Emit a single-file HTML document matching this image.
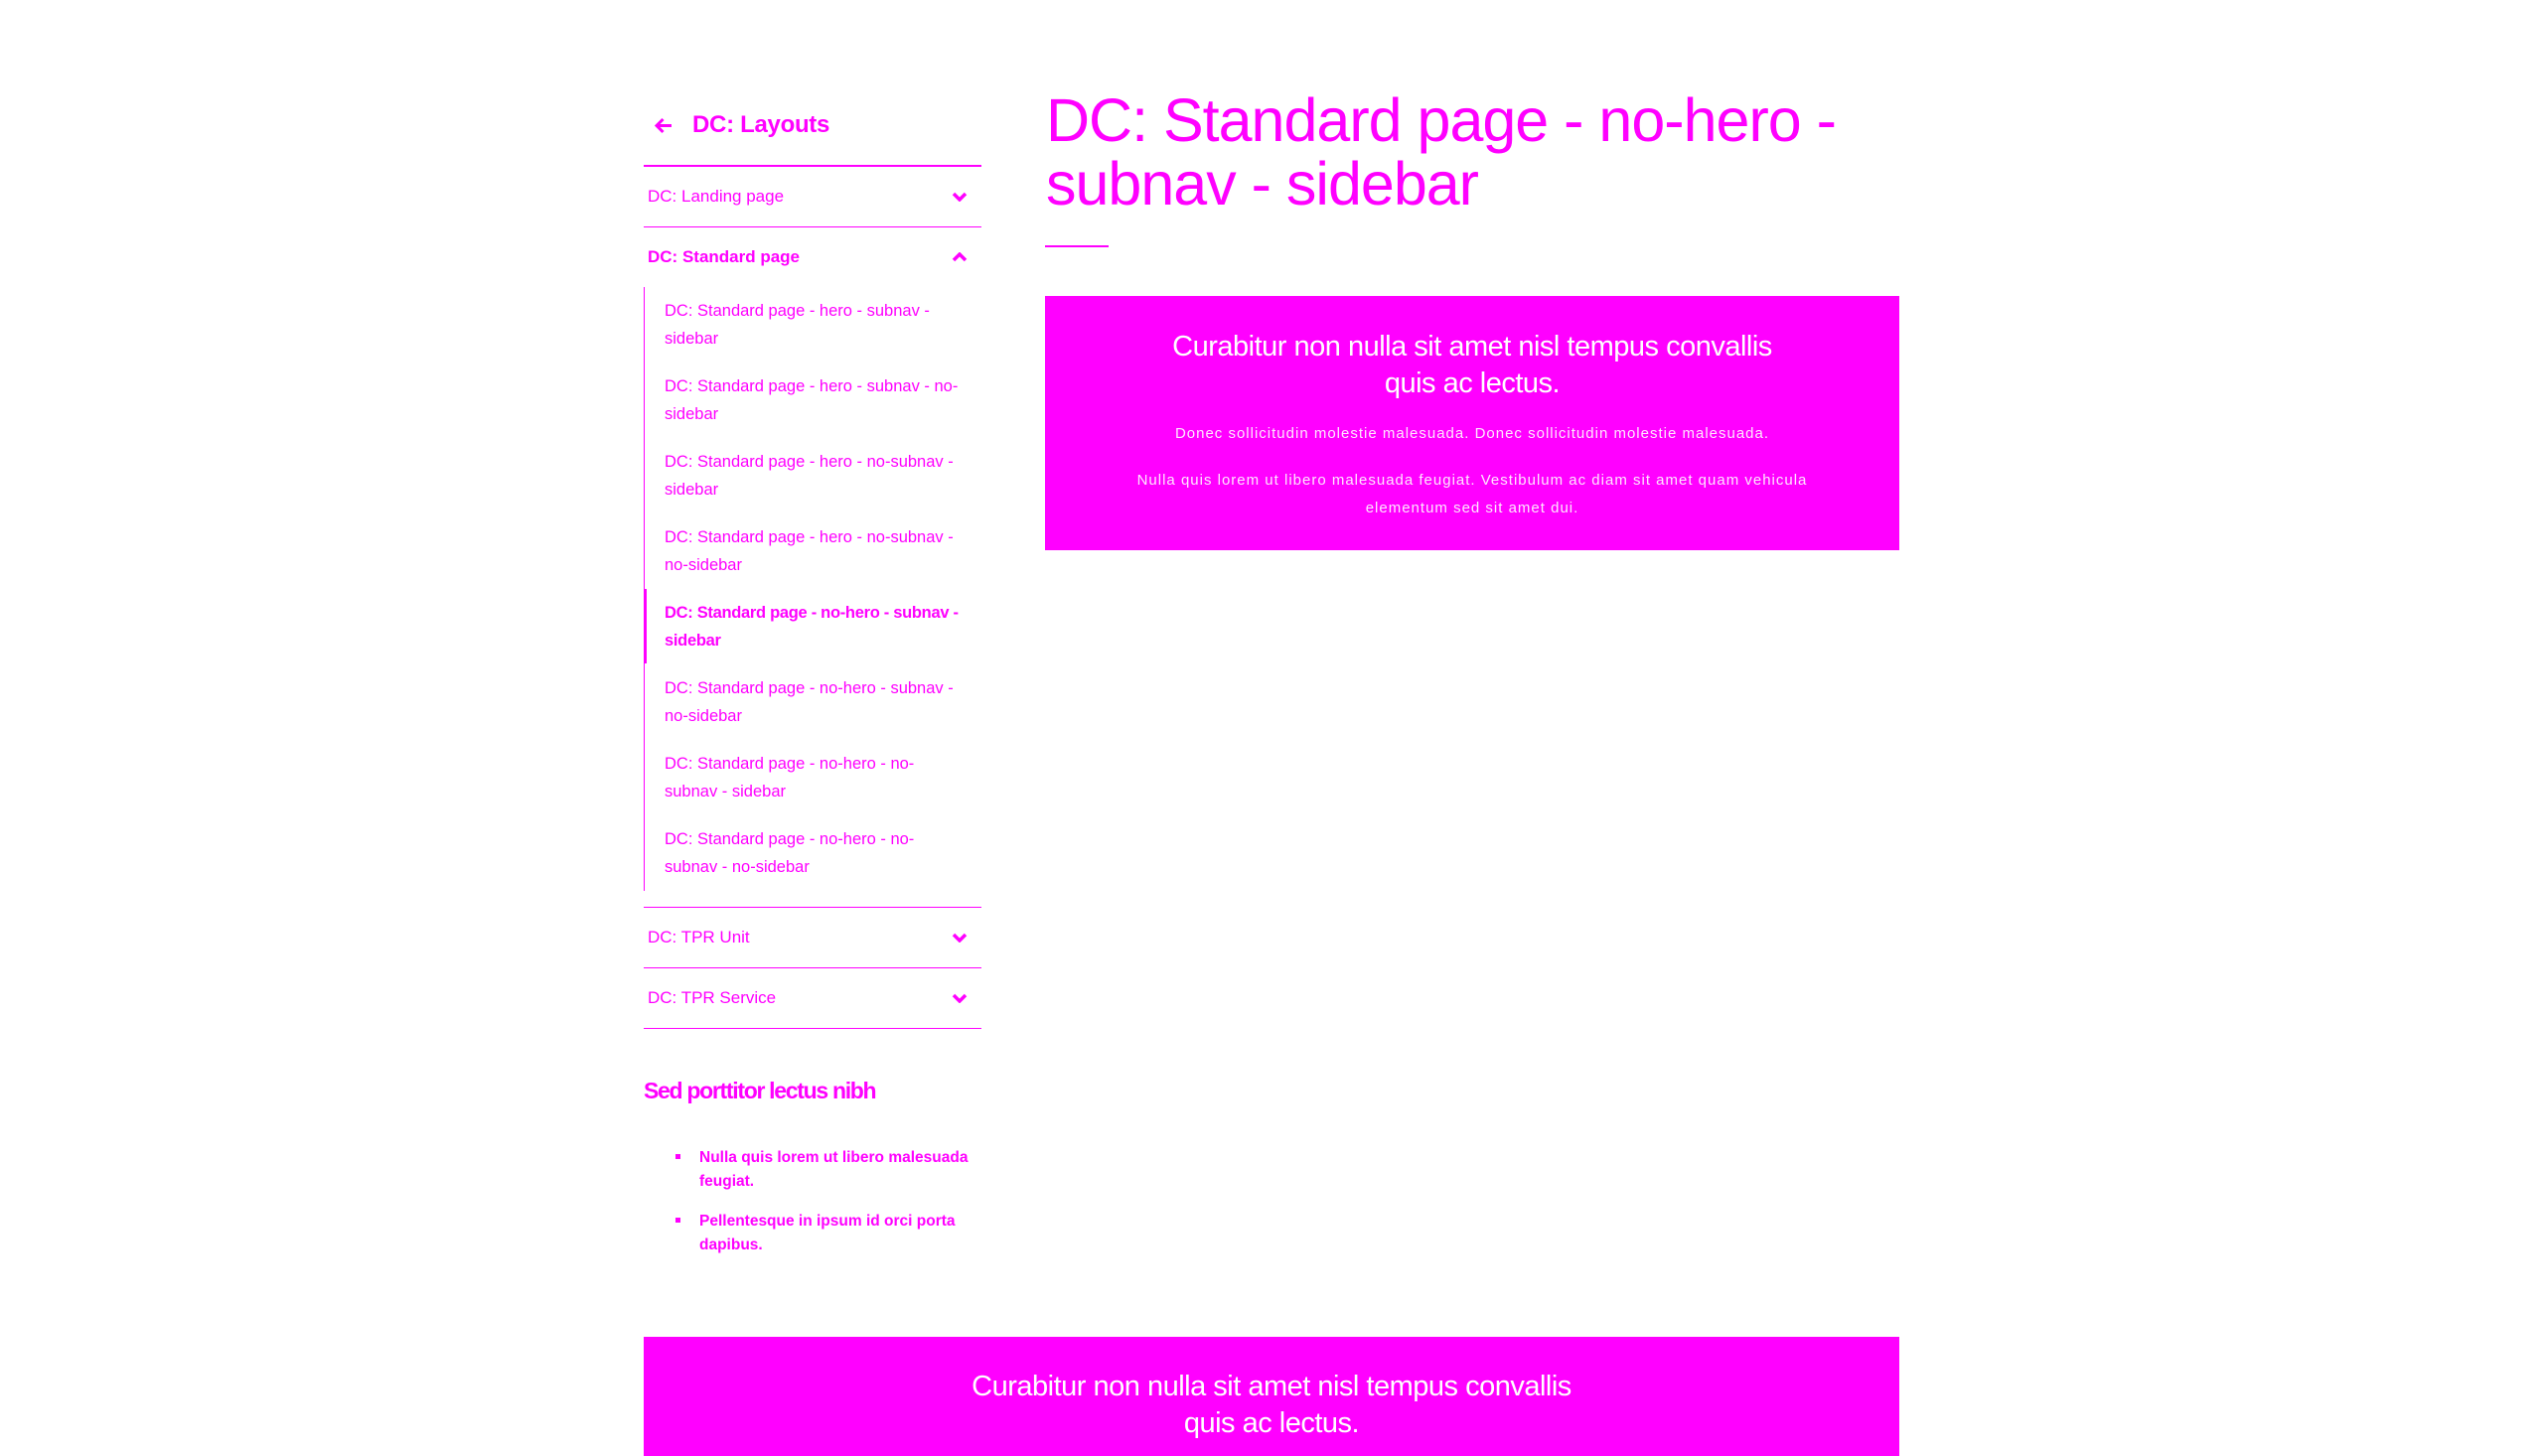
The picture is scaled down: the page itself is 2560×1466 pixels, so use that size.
<!DOCTYPE html>
<html><head><meta charset="utf-8"><style>
*{margin:0;padding:0;box-sizing:border-box}
body{width:2560px;height:1440px;overflow:hidden;background:#fff;font-family:"Liberation Sans",Arial,sans-serif;color:#ff00ff;position:relative}
.a{position:absolute}
.hr{position:absolute;left:648px;width:340px;background:#ff00ff}
.row{position:absolute;left:652px;width:336px;font-size:17px;line-height:24px;letter-spacing:0px}
.chev{position:absolute;left:958px;width:16px;height:10px}
.sub{position:absolute;left:669px;width:315px;font-size:16.5px;line-height:28px;letter-spacing:0px}
.box{position:absolute;background:#ff00ff;color:#fff;text-align:center}
</style></head><body>
<svg class="a" style="left:658px;top:118px" width="20" height="17" viewBox="0 0 20 17"><path d="M18 8.5H3M9.5 2L3 8.5 9.5 15" stroke="#ff00ff" stroke-width="3" fill="none"/></svg>
<div class="a" style="left:697px;top:112px;font-size:24px;font-weight:bold;line-height:28px;letter-spacing:-0.3px">DC: Layouts</div>
<div class="hr" style="top:166px;height:2px"></div>
<div class="row" style="top:186px">DC: Landing page</div>
<svg class="chev" style="top:193px" viewBox="0 0 16 10"><path d="M2 2l6 6 6-6" stroke="#ff00ff" stroke-width="3.5" fill="none"/></svg>
<div class="hr" style="top:228px;height:1px"></div>
<div class="row" style="top:247px;font-weight:bold">DC: Standard page</div>
<svg class="chev" style="top:254px" viewBox="0 0 16 10"><path d="M2 8l6-6 6 6" stroke="#ff00ff" stroke-width="3.5" fill="none"/></svg>
<div class="a" style="left:648px;top:289px;width:1px;height:608px;background:#ff00ff"></div>
<div class="a" style="left:648px;top:593px;width:3px;height:75px;background:#ff00ff"></div>
<div class="sub" style="top:299px">DC: Standard page - hero - subnav -<br>sidebar</div>
<div class="sub" style="top:375px">DC: Standard page - hero - subnav - no-<br>sidebar</div>
<div class="sub" style="top:451px">DC: Standard page - hero - no-subnav -<br>sidebar</div>
<div class="sub" style="top:527px">DC: Standard page - hero - no-subnav -<br>no-sidebar</div>
<div class="sub" style="top:603px;font-weight:bold;letter-spacing:-0.3px">DC: Standard page - no-hero - subnav -<br>sidebar</div>
<div class="sub" style="top:679px">DC: Standard page - no-hero - subnav -<br>no-sidebar</div>
<div class="sub" style="top:755px">DC: Standard page - no-hero - no-<br>subnav - sidebar</div>
<div class="sub" style="top:831px">DC: Standard page - no-hero - no-<br>subnav - no-sidebar</div>
<div class="hr" style="top:913px;height:1px"></div>
<div class="row" style="top:932px">DC: TPR Unit</div>
<svg class="chev" style="top:939px" viewBox="0 0 16 10"><path d="M2 2l6 6 6-6" stroke="#ff00ff" stroke-width="3.5" fill="none"/></svg>
<div class="hr" style="top:974px;height:1px"></div>
<div class="row" style="top:993px">DC: TPR Service</div>
<svg class="chev" style="top:1000px" viewBox="0 0 16 10"><path d="M2 2l6 6 6-6" stroke="#ff00ff" stroke-width="3.5" fill="none"/></svg>
<div class="hr" style="top:1035px;height:1px"></div>
<div class="a" style="left:648px;top:1083px;font-size:23px;font-weight:bold;line-height:30px;letter-spacing:-1.3px">Sed porttitor lectus nibh</div>
<div class="a" style="left:680px;top:1162px;width:5px;height:5px;background:#ff00ff"></div>
<div class="a" style="left:680px;top:1226px;width:5px;height:5px;background:#ff00ff"></div>
<div class="a" style="left:704px;top:1154px;width:280px;font-size:15.5px;font-weight:bold;line-height:24px">Nulla quis lorem ut libero malesuada feugiat.</div>
<div class="a" style="left:704px;top:1218px;width:280px;font-size:15.5px;font-weight:bold;line-height:24px">Pellentesque in ipsum id orci porta dapibus.</div>
<div class="a" style="left:1053px;top:89px;width:880px;font-size:61px;line-height:64px;letter-spacing:-1px">DC: Standard page - no-hero - subnav - sidebar</div>
<div class="a" style="left:1052px;top:247px;width:64px;height:2px;background:#ff00ff"></div>
<div class="box" style="left:1052px;top:298px;width:860px;height:256px">
<div style="position:absolute;left:115px;right:115px;top:33px;font-size:29px;line-height:37px;letter-spacing:-0.5px">Curabitur non nulla sit amet nisl tempus convallis quis ac lectus.</div>
<div style="position:absolute;left:30px;right:30px;top:128px;font-size:15px;line-height:22px;letter-spacing:1px;opacity:.9">Donec sollicitudin molestie malesuada. Donec sollicitudin molestie malesuada.</div>
<div style="position:absolute;left:80px;right:80px;top:172px;font-size:15px;line-height:28px;letter-spacing:1px;opacity:.9">Nulla quis lorem ut libero malesuada feugiat. Vestibulum ac diam sit amet quam vehicula elementum sed sit amet dui.</div>
</div>
<div class="box" style="left:648px;top:1346px;width:1264px;height:120px">
<div style="position:absolute;left:322px;right:322px;top:32px;font-size:29px;line-height:37px;letter-spacing:-0.5px">Curabitur non nulla sit amet nisl tempus convallis quis ac lectus.</div>
</div>
</body></html>
